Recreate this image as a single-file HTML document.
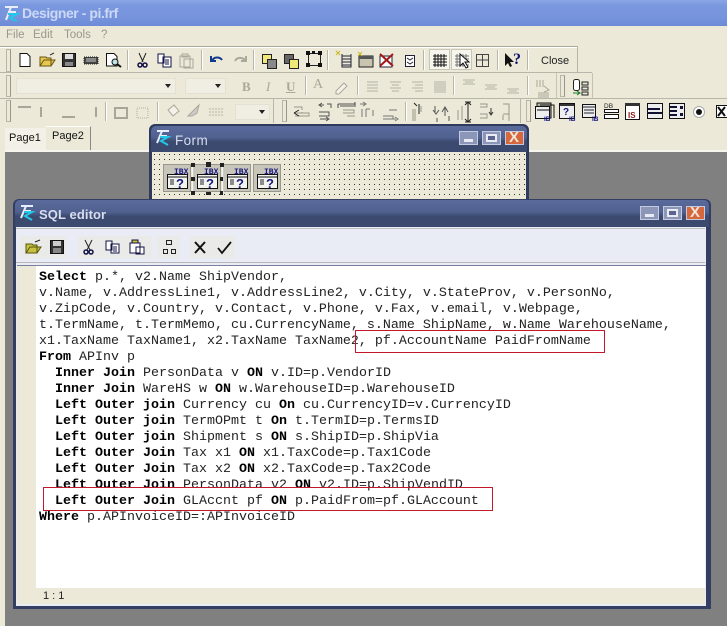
<!DOCTYPE html>
<html><head><meta charset="utf-8"><style>
html,body{margin:0;padding:0;width:727px;height:626px;overflow:hidden;background:#ece9d8;font-family:"Liberation Sans",sans-serif}
.a{position:absolute}
.sep{position:absolute;width:1px;background:#b8b6a8;border-right:1px solid #fff}
.grip{position:absolute;width:3px;border:1px solid #b8b6a8;background:#ece9d8;border-right-color:#98968a}
.combo{position:absolute;background:#f0eee3;border:1px solid #e4e1d2;box-sizing:border-box}
.combo:after{content:"";position:absolute;right:4px;top:5px;border:3px solid transparent;border-top:4px solid #222}
.t{position:absolute;white-space:pre}
pre{position:absolute;left:39px;top:270px;margin:0;font:13.33px/16px "Liberation Mono",monospace;color:#222}
pre b{color:#000}
.red{position:absolute;border:1px solid #c2182c;box-sizing:border-box}
.tb{position:absolute;background:linear-gradient(#5a6b9c 0,#50618f 45%,#3c4a70 60%,#3c4a70 100%)}
.wb{position:absolute;width:19px;height:14px;border:1px solid #c4cbe0;box-sizing:border-box;background:#8b96b8}
</style></head><body>
<!-- main title -->
<div class="a" style="left:0;top:0;width:727px;height:26px;background:linear-gradient(#8aa6e6 0,#7a98de 20%,#7693dc 70%,#6c8ad6 100%)"></div>
<div class="t" style="left:22px;top:4px;font:bold 14px/18px 'Liberation Sans',sans-serif;color:#ccd8f6;letter-spacing:-.45px">Designer - pi.frf</div>
<svg class="a" style="left:2px;top:3px" width="20" height="20"><path d="M3 4H16M6 9H14M9 4L4 17" stroke="#e8eefc" stroke-width="2" fill="none"/><path d="M6 11H15L8 15L15 18" stroke="#22c8e8" stroke-width="2" fill="none"/></svg>
<!-- menu -->
<div class="t" style="left:6px;top:28px;font-size:11.5px;line-height:15px;color:#9a988c">File</div>
<div class="t" style="left:33px;top:28px;font-size:11.5px;line-height:15px;color:#9a988c">Edit</div>
<div class="t" style="left:64px;top:28px;font-size:11.5px;line-height:15px;color:#9a988c">Tools</div>
<div class="t" style="left:101px;top:28px;font-size:11.5px;line-height:15px;color:#9a988c">?</div>
<!-- toolbar borders -->
<div class="a" style="left:0;top:46px;width:577px;height:1px;background:#aaa89a"></div>
<div class="a" style="left:0;top:47px;width:577px;height:1px;background:#fff"></div>
<div class="a" style="left:577px;top:46px;width:1px;height:26px;background:#b8b6a8"></div>
<div class="a" style="left:0;top:72px;width:592px;height:1px;background:#b8b6a8"></div>
<div class="a" style="left:0;top:98px;width:727px;height:1px;background:#b8b6a8"></div>
<div class="a" style="left:556px;top:73px;width:1px;height:25px;background:#c4c2b4"></div>
<div class="a" style="left:592px;top:73px;width:1px;height:25px;background:#c4c2b4"></div>
<div class="a" style="left:273px;top:98px;width:1px;height:25px;background:#b8b6a8"></div>
<div class="a" style="left:520px;top:98px;width:1px;height:25px;background:#b8b6a8"></div>
<div class="grip" style="left:6px;top:49px;height:21px"></div>
<div class="grip" style="left:6px;top:75px;height:20px"></div>
<div class="grip" style="left:6px;top:100px;height:20px"></div>
<div class="grip" style="left:282px;top:100px;height:20px"></div>
<div class="grip" style="left:526px;top:100px;height:20px"></div>
<div class="grip" style="left:560px;top:75px;height:20px"></div>
<div class="sep" style="left:127px;top:50px;height:20px"></div>
<div class="sep" style="left:201px;top:50px;height:20px"></div>
<div class="sep" style="left:253px;top:50px;height:20px"></div>
<div class="sep" style="left:327px;top:50px;height:20px"></div>
<div class="sep" style="left:423px;top:50px;height:20px"></div>
<div class="sep" style="left:497px;top:50px;height:20px"></div>
<div class="sep" style="left:527px;top:50px;height:20px"></div>
<div class="sep" style="left:305px;top:76px;height:19px"></div>
<div class="sep" style="left:357px;top:76px;height:19px"></div>
<div class="sep" style="left:453px;top:76px;height:19px"></div>
<div class="sep" style="left:527px;top:76px;height:19px"></div>
<div class="sep" style="left:105px;top:102px;height:19px"></div>
<div class="sep" style="left:157px;top:102px;height:19px"></div>
<div class="sep" style="left:405px;top:102px;height:19px"></div>
<div class="combo" style="left:16px;top:78px;width:160px;height:16px"></div>
<div class="combo" style="left:185px;top:78px;width:41px;height:16px"></div>
<div class="combo" style="left:235px;top:104px;width:35px;height:16px"></div>
<div class="a" style="left:429px;top:49px;width:21px;height:21px;background:#f6f5ee;border:1px solid #c8c6b8;box-sizing:border-box"></div>
<div class="a" style="left:451px;top:49px;width:21px;height:21px;background:#f6f5ee;border:1px solid #c8c6b8;box-sizing:border-box"></div>
<div class="t" style="left:541px;top:53px;font-size:11px;line-height:16px;color:#222">Close</div>
<div class="t" style="left:242px;top:79px;font:bold 13px/16px 'Liberation Serif',serif;color:#aaa89a">B</div>
<div class="t" style="left:266px;top:79px;font:italic 13px/16px 'Liberation Serif',serif;color:#aaa89a">I</div>
<div class="t" style="left:286px;top:79px;font:bold 13px/16px 'Liberation Serif',serif;color:#aaa89a;text-decoration:underline">U</div>
<div class="t" style="left:313px;top:77px;font:14px/16px 'Liberation Serif',serif;color:#aaa89a">A</div>
<!-- icons -->
<svg class="a" style="left:0;top:46px" width="727" height="78" fill="none">
<!-- row 1 -->
<path d="M20 7.5H27L30 10.5V20.5H20Z" fill="#fff" stroke="#111"/>
<path d="M40 20V11H46L47 12H51V20Z M40 20L44 14H55L51 20Z" fill="#e8c850" stroke="#665510"/><path d="M50 9L54 7" stroke="#333"/>
<rect x="62.5" y="7.5" width="13" height="13" fill="#333" stroke="#111"/><rect x="65" y="8" width="8" height="5" fill="#ddd"/><rect x="65" y="16" width="8" height="4" fill="#888"/>
<rect x="84" y="11" width="14" height="7" fill="#444" stroke="#222" stroke-dasharray="1 1"/><path d="M86 13H96M86 15H96" stroke="#ccc"/>
<path d="M106.500 7.500H114L117 10.500V20H106.500Z" fill="#fff" stroke="#111"/><circle cx="115" cy="16" r="3" fill="#bfe4e8" stroke="#111"/><path d="M117 18L121 21" stroke="#111" stroke-width="2"/>
<path d="M139 7L143 16M146 7L142 16" stroke="#222"/><circle cx="140" cy="19" r="2" stroke="#114" stroke-width="1.500"/><circle cx="145" cy="19" r="2" stroke="#114" stroke-width="1.500"/>
<path d="M158 8H164V17H158ZM163 11H171V21H163Z" fill="#fff" stroke="#114"/><path d="M165 14H169M165 16H169M165 18H169" stroke="#114"/>
<path d="M180 10H190V21H180ZM184 13H193V22H184Z" fill="#ece9d8" stroke="#aaa89a"/><rect x="182" y="8" width="6" height="3" stroke="#aaa89a"/>
<path d="M212 15C214 10 220 11 222 14M211 10V15H216" stroke="#123a8a" stroke-width="2"/>
<path d="M235 15C237 11 242 11 245 14M246 10V15H241" stroke="#aaa89a" stroke-width="2"/>
<rect x="262.500" y="8.500" width="9" height="9" fill="#f0e878" stroke="#222"/><rect x="267.500" y="13.500" width="9" height="9" fill="#888" stroke="#222"/>
<rect x="284.500" y="8.500" width="9" height="9" fill="#666" stroke="#222"/><rect x="289.500" y="13.500" width="9" height="9" fill="#f0e878" stroke="#222"/>
<rect x="308.500" y="7.500" width="12" height="12" stroke="#222"/><path d="M306 5h4v4h-4zM318 5h4v4h-4zM306 17h4v4h-4zM318 17h4v4h-4zM312 5h3v3h-3z" fill="#111"/>
<path d="M342 10H351M342 13H351M342 16H351M342 19H351M342 8V21H351V8" stroke="#223"/><path d="M336 5L340 9M340 5L336 9" stroke="#c8b820"/>
<rect x="359" y="10" width="14" height="11" fill="#c8c4b0" stroke="#222"/><rect x="359" y="10" width="14" height="3" fill="#555"/><path d="M358 6L362 10M362 6L358 10" stroke="#c8b820"/>
<path d="M380 10H392V21H380Z" fill="#fff" stroke="#223"/><path d="M380 8L393 20M393 8L380 20" stroke="#a01818" stroke-width="2"/>
<rect x="405.500" y="9.500" width="9" height="11" fill="#fff" stroke="#223"/><path d="M407 12L410 14L413 12M407 16L410 18L413 16" stroke="#223"/>
<path d="M433 10H447M433 13H447M433 16H447M433 19H447M435 8V21M438 8V21M441 8V21M444 8V21" stroke="#111"/>
<path d="M455 10H469M455 13H469M455 16H469M455 19H469M457 8V21M460 8V21M463 8V21M466 8V21" stroke="#777"/><path d="M460 8V20L463 17L466 22L468 21L465 16H469Z" fill="#fff" stroke="#111"/>
<rect x="476.500" y="8.500" width="12" height="12" stroke="#444"/><path d="M482.500 8V20M476 14H488" stroke="#444"/>
<path d="M505 7V20L508 17L510 21L512 20L510 16H514Z" fill="#111"/><text x="513" y="18" font-family="Liberation Serif" font-weight="bold" font-size="16" fill="#15156e">?</text>
<!-- row 2 -->
<path d="M336 45L344 37L347 40L339 48H336Z" stroke="#aaa89a" fill="#f4f2e8"/>
<path d="M367 36H378M367 39H378M367 42H378M367 45H378M390 36H401M392 39H399M390 42H401M392 45H399M412 36H423M415 39H423M412 42H423M415 45H423M434 36H446M434 38H446M434 40H446M434 42H446M434 44H446M434 46H446" stroke="#b4b2a4"/>
<path d="M463 34H475M465 36H473M463 38H475M485 39H497M487 41H495M485 43H497M507 43H519M509 45H517M507 47H519" stroke="#b4b2a4"/>
<path d="M537 34V41M540 34V41M543 34V41M544 40L549 44L544 46M538 47H549M538 49H549M538 51H549" stroke="#aaa89a"/>
<rect x="573.500" y="33.500" width="6" height="11" rx="2" stroke="#222" fill="#fff"/><path d="M573 47H580M577 45L580 47L577 49" stroke="#1a7a2a"/><path d="M582 36H588V39H582ZM582 41H588V44H582ZM582 46H588V49H582Z" stroke="#222"/>
<!-- row 3 -->
<path d="M18 61H31M41 61V71M62 71H75M96 61V71" stroke="#a8a698" stroke-width="2"/>
<rect x="115" y="62" width="12" height="10" stroke="#a8a698" stroke-width="2"/>
<rect x="137" y="62" width="11" height="10" stroke="#b0ae9f" stroke-dasharray="1 1"/>
<path d="M168 64L174 59L179 65L173 70Z" stroke="#aaa89a" fill="#f4f2e8"/>
<path d="M188 70L199 59L197 67L192 70Z" stroke="#aaa89a" fill="#ccc"/>
<path d="M209 63H224M209 66H224M209 69H224" stroke="#b4b2a4" stroke-dasharray="2 1"/>
<g transform="translate(0,-2)">
<path d="M294 63H302V66M295 69H309V72H295M302 69V68" stroke="#999788"/><path d="M294 69L299 66M294 69L299 72" stroke="#222"/>
<path d="M320 61H324M322 59L319 61L322 63M327 60H331V64M319 68H329V72H319M320 75H328M326 73L329 75L326 77" stroke="#555"/>
<path d="M338 60V64M338 60H355M355 58V63M340 62H354" stroke="#222" stroke-width=".8"/><path d="M343 66H354V69H343M347 72H355" stroke="#999788"/>
<path d="M362 65V73M366 65V73M366 65H370M373 66V72M360 60H365M363 58L366 60L363 62" stroke="#777"/>
<path d="M383 72H393V75H383M389 66H397M393 75H396M395 73L398 75L395 77" stroke="#777"/>
<path d="M413 65V77M415 65V77M421 62V68" stroke="#999788"/><path d="M414 59L417 62M419 60V70" stroke="#222"/>
<path d="M435 62V68M433 66L436 70L439 66M442 68L445 63L448 68M445 63V72M449 72V77M437 74V78" stroke="#555"/>
<path d="M458 66V76M462 62V76" stroke="#999788"/><path d="M468 58V78M465 58H471M465 78H471M468 58L465 61M468 58L471 61M468 78L465 75M468 78L471 75" stroke="#222"/>
<path d="M480 60H487V63H480M480 70H487V74H480" stroke="#999788"/><path d="M491 64V70M489 68L491 71L493 68" stroke="#333"/>
<path d="M503 60H509V70H503M503 71V76M509 70V77" stroke="#999788"/>
</g>
<!-- data icons -->
<g transform="translate(0,-3)">
<g stroke="#111"><path d="M537 60H551V75H537Z" fill="#b8b6a8"/><path d="M540 62H554V75" /><rect x="535.500" y="63.500" width="14" height="12" fill="#eee"/><path d="M537 67H549" /></g><text x="544" y="78" font-family="Liberation Sans" font-weight="bold" font-size="6.500" fill="#16167e">IB</text>
<rect x="559.500" y="60.500" width="15" height="15" fill="#eee" stroke="#111"/><rect x="560" y="61" width="14" height="2" fill="#333"/><text x="563" y="72" font-family="Liberation Sans" font-weight="bold" font-size="10" fill="#16167e">?</text><text x="569" y="78" font-family="Liberation Sans" font-weight="bold" font-size="6.500" fill="#16167e">IB</text>
<rect x="582.500" y="61.500" width="13" height="13" fill="#eee" stroke="#111"/><path d="M583 64H595M584 67H594M584 70H594" stroke="#223"/><text x="592" y="78" font-family="Liberation Sans" font-weight="bold" font-size="6.500" fill="#16167e">IB</text>
<text x="604" y="65" font-family="Liberation Sans" font-size="6.500" fill="#222">DB</text><rect x="604.500" y="66.500" width="14" height="3" fill="#fff" stroke="#111"/><rect x="604.500" y="71.500" width="14" height="4" fill="#fff" stroke="#111"/>
<rect x="625.500" y="60.500" width="14" height="16" fill="#fff" stroke="#111"/><rect x="625" y="60" width="15" height="3" fill="#333"/><text x="628" y="75" font-family="Liberation Sans" font-weight="bold" font-size="8" fill="#8a1818">IS</text>
<rect x="647.500" y="60.500" width="15" height="15" fill="#eee" stroke="#111"/><path d="M648 66H660M648 70H662" stroke="#113" stroke-width="2"/>
<rect x="669.500" y="60.500" width="15" height="15" fill="#eee" stroke="#111"/><path d="M670 64H677M670 68H677M670 72H677" stroke="#113" stroke-width="2"/><path d="M680 63h3v3h-3zM680 70h3v3h-3z" fill="#113"/>
<circle cx="699" cy="69" r="5.500" fill="#fff" stroke="#aaa"/><circle cx="699" cy="69" r="3" fill="#111"/>
<rect x="716.500" y="62.500" width="11" height="12" fill="#fff" stroke="#111"/><path d="M718 64L725 73M725 64L718 73" stroke="#111" stroke-width="2"/>
</g>
</svg>
<!-- tabs -->
<div class="a" style="left:0;top:123px;width:727px;height:28px;background:#ece9d8"></div>
<div class="a" style="left:5px;top:150px;width:722px;height:2px;background:#f6f5ee"></div>
<div class="a" style="left:5px;top:128px;width:41px;height:22px;background:#f3f1e7"></div>
<div class="a" style="left:46px;top:126px;width:45px;height:24px;background:#ece9d8;border-right:1px solid #888;border-top:1px solid #fff;box-sizing:border-box"></div>
<div class="t" style="left:9px;top:131px;font-size:11px;line-height:15px;color:#111">Page1</div>
<div class="t" style="left:52px;top:129px;font-size:11px;line-height:15px;color:#111">Page2</div>
<!-- MDI grey -->
<div class="a" style="left:5px;top:152px;width:722px;height:474px;background:#808080"></div>
<!-- Form window -->
<div class="a" style="left:149px;top:124px;width:380px;height:80px;background:#2f3a5c;border-radius:6px 6px 0 0"></div>
<div class="tb" style="left:151px;top:126px;width:376px;height:26px;border-radius:5px 5px 0 0"></div>
<svg class="a" style="left:152px;top:152px" width="374" height="50"><defs><pattern id="dots" width="5" height="5" patternUnits="userSpaceOnUse"><rect width="5" height="5" fill="#ece9d8"/><rect x="2" y="2" width="1" height="1" fill="#333"/></pattern></defs><rect width="374" height="50" fill="url(#dots)"/></svg>
<div class="t" style="left:175px;top:132px;font-size:13.5px;line-height:17px;color:#d8def0;letter-spacing:.4px">Form</div>
<svg class="a" style="left:154px;top:128px" width="20" height="20"><path d="M3 3H15M5 8H13M8 3L3 15" stroke="#e8eefc" stroke-width="2" fill="none"/><path d="M6 9H14L7 13L14 17" stroke="#22c8e8" stroke-width="2" fill="none"/></svg>
<div class="wb" style="left:459px;top:131px"></div><div class="a" style="left:464px;top:139px;width:9px;height:3px;background:#e8ebf4"></div>
<div class="wb" style="left:482px;top:131px"></div><div class="a" style="left:486px;top:134px;width:11px;height:8px;border:2px solid #e8ebf4;background:#5a6690;box-sizing:border-box"></div>
<div class="wb" style="left:505px;top:131px;background:#d8683c"></div><div class="t" style="left:509px;top:129px;font:bold 15px/17px 'Liberation Sans';color:#f0e8e0">X</div>
<!-- IBX icons -->
<svg class="a" style="left:158px;top:160px" width="130" height="40">
<g id="i"><rect x="5.500" y="4.500" width="27" height="27" fill="#c8c6ba" stroke="#9a988c"/><text x="16" y="14" font-family="Liberation Mono" font-size="8" font-weight="bold" fill="#16167e">IBX</text><rect x="9.500" y="14.500" width="20" height="14" fill="#f4f4ee" stroke="#111"/><path d="M10 17H29" stroke="#111"/><path d="M12 20H16M12 22H16M12 24H16" stroke="#223"/><text x="18" y="28" font-family="Liberation Sans" font-weight="bold" font-size="13" fill="#16167e">?</text></g>
<use href="#i" x="30"/><use href="#i" x="60"/><use href="#i" x="90"/>
<path d="M35 5V33M65 5V33" stroke="#fff"/>
<path d="M33 3h4v4h-4zM62 3h4v4h-4zM33 17h4v4h-4zM62 17h3v4h-3zM33 31h4v4h-4zM48 32h5v3h-5zM62 31h3v4h-3z" fill="#222"/><rect x="48" y="2" width="5" height="5" fill="#222"/>
</svg>
<!-- SQL window -->
<div class="a" style="left:13px;top:199px;width:698px;height:410px;background:#333e62;border-radius:6px 6px 0 0"></div>
<div class="tb" style="left:15px;top:200px;width:694px;height:27px;border-radius:5px 5px 0 0"></div>
<div class="a" style="left:16px;top:227px;width:690px;height:379px;background:#e9ebf5"></div>
<div class="a" style="left:16px;top:228px;width:689px;height:1px;background:#c0c0c0"></div>
<div class="a" style="left:16px;top:262px;width:689px;height:1px;background:#b8b8b8"></div>
<div class="a" style="left:17px;top:265px;width:689px;height:1px;background:#7a7f9f"></div>
<div class="a" style="left:17px;top:266px;width:19px;height:322px;background:#ece9d8"></div>
<div class="a" style="left:36px;top:266px;width:669px;height:322px;background:#fff"></div>
<div class="a" style="left:17px;top:588px;width:688px;height:16px;background:#ece9d8"></div>
<div class="t" style="left:39px;top:207px;font:bold 13px/16px 'Liberation Sans',sans-serif;color:#d8def0;letter-spacing:.1px">SQL editor</div>
<svg class="a" style="left:18px;top:203px" width="20" height="20"><path d="M3 3H15M5 8H13M8 3L3 15" stroke="#e8eefc" stroke-width="2" fill="none"/><path d="M6 9H14L7 13L14 17" stroke="#22c8e8" stroke-width="2" fill="none"/></svg>
<div class="wb" style="left:640px;top:206px"></div><div class="a" style="left:645px;top:214px;width:9px;height:3px;background:#e8ebf4"></div>
<div class="wb" style="left:663px;top:206px"></div><div class="a" style="left:667px;top:209px;width:11px;height:8px;border:2px solid #e8ebf4;background:#5a6690;box-sizing:border-box"></div>
<div class="wb" style="left:686px;top:206px;background:#d8683c"></div><div class="t" style="left:690px;top:204px;font:bold 15px/17px 'Liberation Sans';color:#f0e8e0">X</div>
<!-- SQL toolbar -->
<div class="a" style="left:20px;top:236px;width:46px;height:22px;background:#ece9d8;opacity:.4"></div>
<div class="a" style="left:78px;top:236px;width:74px;height:22px;background:#ece9d8;opacity:.4"></div>
<div class="a" style="left:157px;top:236px;width:23px;height:22px;background:#ece9d8;opacity:.4"></div>
<div class="a" style="left:190px;top:236px;width:45px;height:22px;background:#ece9d8;opacity:.4"></div>
<svg class="a" style="left:0;top:230px" width="250" height="32" fill="none">
<path d="M26 23V14H32L33 15H37V23Z M26 23L30 17H41L37 23Z" fill="#c8c040" stroke="#555510"/><path d="M35 12L40 10" stroke="#222"/>
<rect x="50.500" y="10.500" width="13" height="13" fill="#333" stroke="#111"/><rect x="53" y="11" width="8" height="5" fill="#ccc"/><rect x="53" y="18" width="8" height="5" fill="#888"/>
<path d="M85 10L90 20M92 10L87 20" stroke="#222"/><circle cx="86" cy="22" r="2" stroke="#114" stroke-width="1.500"/><circle cx="91" cy="22" r="2" stroke="#114" stroke-width="1.500"/>
<path d="M106 11H112V20H106ZM111 14H119V23H111Z" fill="#fff" stroke="#114"/><path d="M113 17H117M113 19H117M113 21H117" stroke="#114"/>
<path d="M130 13H140V23H130ZM136 17H144V24H136Z" fill="#fff" stroke="#114"/><rect x="132" y="10" width="6" height="3" fill="#c8c040" stroke="#114"/>
<path d="M166.500 10.500h5v4h-5zM163.500 19.500h4v4h-4zM171.500 19.500h4v4h-4z" stroke="#222"/>
<path d="M195 12L205 23M205 12L195 23" stroke="#111" stroke-width="2"/>
<path d="M218 18L222 23L231 12" stroke="#111" stroke-width="1.800"/>
</svg>
<!-- SQL text -->
<pre><b>Select</b> p.*, v2.Name ShipVendor,
v.Name, v.AddressLine1, v.AddressLine2, v.City, v.StateProv, v.PersonNo,
v.ZipCode, v.Country, v.Contact, v.Phone, v.Fax, v.email, v.Webpage,
t.TermName, t.TermMemo, cu.CurrencyName, s.Name ShipName, w.Name WarehouseName,
x1.TaxName TaxName1, x2.TaxName TaxName2, pf.AccountName PaidFromName
<b>From</b> APInv p
  <b>Inner Join</b> PersonData v <b>ON</b> v.ID=p.VendorID
  <b>Inner Join</b> WareHS w <b>ON</b> w.WarehouseID=p.WarehouseID
  <b>Left Outer join</b> Currency cu <b>On</b> cu.CurrencyID=v.CurrencyID
  <b>Left Outer join</b> TermOPmt t <b>On</b> t.TermID=p.TermsID
  <b>Left Outer join</b> Shipment s <b>ON</b> s.ShipID=p.ShipVia
  <b>Left Outer Join</b> Tax x1 <b>ON</b> x1.TaxCode=p.Tax1Code
  <b>Left Outer Join</b> Tax x2 <b>ON</b> x2.TaxCode=p.Tax2Code
  <b>Left Outer Join</b> PersonData v2 <b>ON</b> v2.ID=p.ShipVendID
  <b>Left Outer Join</b> GLAccnt pf <b>ON</b> p.PaidFrom=pf.GLAccount
<b>Where</b> p.APInvoiceID=:APInvoiceID</pre>
<div class="red" style="left:355px;top:330px;width:250px;height:23px"></div>
<div class="red" style="left:43px;top:487px;width:450px;height:24px;background:transparent"></div>
<div class="t" style="left:43px;top:589px;font-size:11px;line-height:15px;color:#222">1 : 1</div>
</body></html>
